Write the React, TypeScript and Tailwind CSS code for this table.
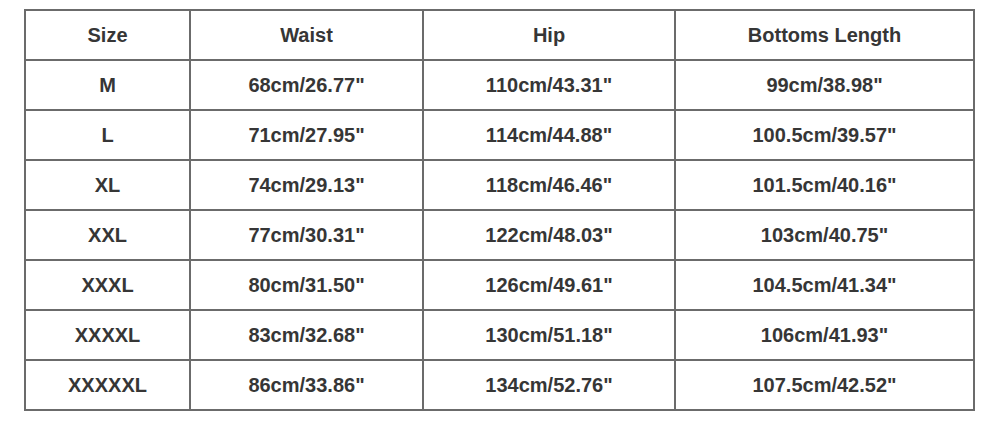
const headers = ["Size", "Waist", "Hip", "Bottoms Length"];

const rows: string[][] = [
  ["M", "68cm/26.77''", "110cm/43.31''", "99cm/38.98''"],
  ["L", "71cm/27.95''", "114cm/44.88''", "100.5cm/39.57''"],
  ["XL", "74cm/29.13''", "118cm/46.46''", "101.5cm/40.16''"],
  ["XXL", "77cm/30.31''", "122cm/48.03''", "103cm/40.75''"],
  ["XXXL", "80cm/31.50''", "126cm/49.61''", "104.5cm/41.34''"],
  ["XXXXL", "83cm/32.68''", "130cm/51.18''", "106cm/41.93''"],
  ["XXXXXL", "86cm/33.86''", "134cm/52.76''", "107.5cm/42.52''"],
];

const cell =
  "h-[50px] border-2 border-[#6b6b6b] text-center align-middle p-0";

export default function App() {
  return (
    <div className="w-[1000px] h-[421px] bg-white pt-[9px] pl-[24px] font-['Liberation_Sans',Arial,sans-serif] font-bold text-[20px] text-[#363636]">
      <table className="table-fixed border-collapse w-[949px]">
        <colgroup>
          <col className="w-[165px]" />
          <col className="w-[233px]" />
          <col className="w-[252px]" />
          <col className="w-[299px]" />
        </colgroup>
        <thead>
          <tr>
            {headers.map((h) => (
              <th key={h} className={cell + " font-bold"}>
                {h}
              </th>
            ))}
          </tr>
        </thead>
        <tbody>
          {rows.map((r) => (
            <tr key={r[0]}>
              {r.map((v, i) => (
                <td key={i} className={cell}>
                  {v.replace("''", '"')}
                </td>
              ))}
            </tr>
          ))}
        </tbody>
      </table>
    </div>
  );
}
